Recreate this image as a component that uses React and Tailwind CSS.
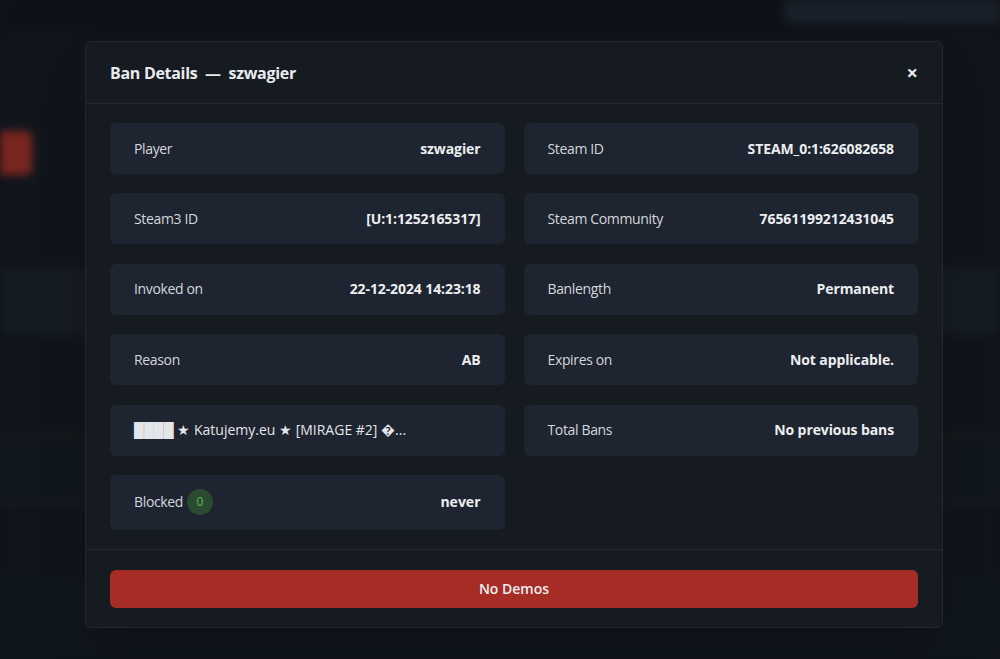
import React from 'react';

const rows = [
  { label: 'Player', value: 'szwagier' },
  { label: 'Steam ID', value: 'STEAM_0:1:626082658' },
  { label: 'Steam3 ID', value: '[U:1:1252165317]' },
  { label: 'Steam Community', value: '76561199212431045' },
  { label: 'Invoked on', value: '22-12-2024 14:23:18' },
  { label: 'Banlength', value: 'Permanent' },
  { label: 'Reason', value: 'AB' },
  { label: 'Expires on', value: 'Not applicable.' },
  { label: '████ ★ Katujemy.eu ★ [MIRAGE #2] �...', value: '', server: true },
  { label: 'Total Bans', value: 'No previous bans' },
];

function InfoCard({ label, value, server }) {
  return (
    <div className="flex h-[51px] items-center justify-between rounded-md bg-[#1e2430] px-6 text-sm">
      <span className={server ? 'text-[#e3e5ea]' : 'tracking-[-0.35px] text-[#d4d7dd]'}>{label}</span>
      {value && <span className="font-bold tracking-[-0.1px] text-[#eceef1]">{value}</span>}
    </div>
  );
}

function Backdrop() {
  // the page behind the dialog, blurred out
  return (
    <div className="flex h-full flex-col blur-[4px]">
      <div className="flex h-[34px] justify-end bg-[#0e1218]">
        <div className="h-[24px] w-[215px] bg-[#1a2029]" />
      </div>
      <div className="h-[97px] bg-[#10151c]" />
      <div className="flex h-[44px] items-center bg-[#10151c]">
        <div className="h-[44px] w-[32px] rounded-r-md bg-[#7a2620]" />
      </div>
      <div className="h-[94px] bg-[#10151c]" />
      <div className="h-[65px] bg-[#161c23]" />
      <div className="h-[100px] bg-[#10151c]" />
      <div className="h-[6px] bg-[#17181c]" />
      <div className="h-[60px] bg-[#11171e]" />
      <div className="h-[6px] bg-[#171a1e]" />
      <div className="h-[70px] bg-[#10141b]" />
      <div className="flex-1 bg-[#10161d]" />
    </div>
  );
}

export default function App() {
  return (
    <div
      className="relative h-[659px] w-[1000px] overflow-hidden bg-[#0f141b]"
      style={{ fontFamily: '"Open Sans", "Noto Sans", sans-serif' }}
    >
      <Backdrop />

      <div className="absolute left-[85px] top-[41px] w-[858px] rounded-md border border-[#222731] bg-[#161a21] shadow-2xl">
        <div className="flex h-[62px] items-center justify-between border-b border-[#232831] px-6">
          <h2 className="text-base font-bold tracking-[-0.3px] text-[#e8eaee]">
            Ban Details&nbsp; —&nbsp; szwagier
          </h2>
          <button className="text-xl font-bold leading-none text-[#e8eaee]">×</button>
        </div>

        <div className="grid grid-cols-2 gap-x-[19px] gap-y-[19.4px] px-6 pb-[19px] pt-[19px]">
          {rows.map((r, i) => (
            <InfoCard key={i} label={r.label} value={r.value} server={r.server} />
          ))}
          <div className="flex h-[55px] items-center justify-between rounded-md bg-[#1e2430] px-6 text-sm">
            <div className="flex items-center gap-1">
              <span className="tracking-[-0.35px] text-[#d4d7dd]">Blocked</span>
              <span className="flex h-[26px] w-[26px] items-center justify-center rounded-full bg-[#2b4a32] text-xs text-[#5cb85c]">
                0
              </span>
            </div>
            <span className="font-bold text-[#eceef1]">never</span>
          </div>
        </div>

        <div className="border-t border-[#232831] px-6 pb-[19px] pt-5">
          <button className="flex h-[38px] w-full items-center justify-center rounded-md bg-[#a52d25] text-sm font-semibold text-[#eceef1]">
            No Demos
          </button>
        </div>
      </div>
    </div>
  );
}
